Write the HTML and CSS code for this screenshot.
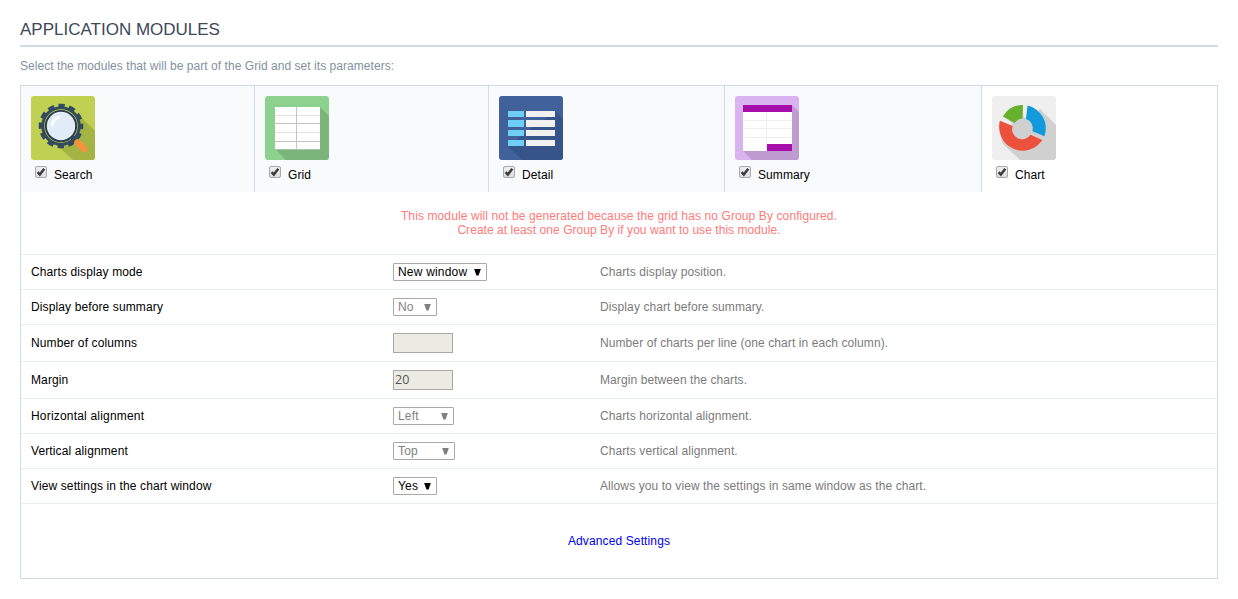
FILE: index.html
```html
<!DOCTYPE html>
<html lang="en">
<head>
<meta charset="utf-8">
<title>Application Modules</title>
<link rel="stylesheet" href="styles.css">
</head>
<body>
<svg class="defs" width="0" height="0"><defs>
<linearGradient id="box" x1="0" y1="0" x2="0" y2="1"><stop offset="0" stop-color="#f0f0f0"/><stop offset="1" stop-color="#dcdcdc"/></linearGradient>
<symbol id="check" viewBox="0 0 12 12"><rect x=".5" y=".5" width="11" height="11" rx="1.5" fill="url(#box)" stroke="#a9a9a9"/><path d="M2.6 6.2 4.8 8.6 9.3 2.8" fill="none" stroke="#3d3d3d" stroke-width="2.5"/></symbol>
<clipPath id="tile"><rect width="64" height="64" rx="3"/></clipPath>
</defs></svg>
<h1 class="title">APPLICATION MODULES</h1>
<p class="intro">Select the modules that will be part of the Grid and set its parameters:</p>
<main class="panel">
  <nav class="tabs">
    <div class="tab">
      <svg class="icon" viewBox="0 0 64 64"><g clip-path="url(#tile)"><rect width="64" height="64" fill="#bfd052"/><path d="M47 18 64 35V64H42L17 41Z" fill="#a4b444"/>
      <circle cx="30" cy="30" r="19.8" fill="#324a5e"/><circle cx="30" cy="30" r="20" fill="none" stroke="#324a5e" stroke-width="4.6" stroke-dasharray="6.2 4.27" stroke-dashoffset="3.1"/>
      <circle cx="30" cy="30" r="16.8" fill="#bfd052"/><circle cx="30" cy="30" r="16.1" fill="#2b3b4e"/><circle cx="30" cy="30" r="14.2" fill="#e0edf8"/><path d="M21 30a9 9 0 0 1 8-9" fill="none" stroke="#fff" stroke-width="3" opacity=".8"/>
      <path d="m41 41 4 4" stroke="#324a5e" stroke-width="5"/><path d="m46.5 46.500 6.500 6.500" stroke="#f7923a" stroke-width="6.500" stroke-linecap="round"/></g></svg>
      <label class="choice"><svg class="check"><use href="#check"/></svg>Search</label>
    </div>
    <div class="tab">
      <svg class="icon" viewBox="0 0 64 64"><g clip-path="url(#tile)"><rect width="64" height="64" fill="#8dd18f"/><path d="M55 11 64 20V64H21L10 53Z" fill="#7bb57c"/><rect x="10" y="11" width="45" height="43" fill="#fff"/><path d="M10 19.5h45M10 36.5h45" stroke="#e3e3e3"/><path d="M10 27.5h45M10 45.5h45M31.5 11v42" stroke="#c2c2c2"/><path d="M10 53.500h45" stroke="#a5c5a6"/></g></svg>
      <label class="choice"><svg class="check"><use href="#check"/></svg>Grid</label>
    </div>
    <div class="tab">
      <svg class="icon" viewBox="0 0 64 64"><g clip-path="url(#tile)"><rect width="64" height="64" fill="#40619a"/><path d="M56 15 64 23V64H23L9 50Z" fill="#37548a"/><path d="M9 15h16v6H9zM9 24h16v7H9zM9 34h16v6H9zM9 44h16v6H9z" fill="#6dcff6"/><path d="M27 15h29v6H27zM27 24h29v7H27zM27 34h29v6H27zM27 44h29v6H27z" fill="#f0f0f0"/></g></svg>
      <label class="choice"><svg class="check"><use href="#check"/></svg>Detail</label>
    </div>
    <div class="tab">
      <svg class="icon" viewBox="0 0 64 64"><g clip-path="url(#tile)"><rect width="64" height="64" fill="#d9b3ef"/><path d="M57 9 64 16V64H17L8 55Z" fill="#bd9bd0"/><rect x="8" y="9" width="49" height="46" fill="#fff"/><path d="M31.5 16V55M8 24.5h49M8 32.5h49M8 41.5h49" stroke="#eee"/><path d="M8 9h49v7H8zM32 48h25v7H32z" fill="#a80ea9"/></g></svg>
      <label class="choice"><svg class="check"><use href="#check"/></svg>Summary</label>
    </div>
    <div class="tab active">
      <svg class="icon" viewBox="0 0 64 64"><g clip-path="url(#tile)"><rect width="64" height="64" fill="#efefef"/><path d="M48 13 64 29V64H28L10 47 7 25 30 35Z" fill="#d0d0d0"/><path d="M11 20 30 9 32 24 22 29Z" fill="#d4d4d4"/><circle cx="30.5" cy="32" r="11" fill="#d0d0d0"/><path d="M35.500 9.5A23.5 23.5 0 0 1 52.5 40.3L40.5 35.2A10 10 0 0 0 34 23Z" fill="#119bdc"/><path d="M31 8.9 30.500 22.5A10 10 0 0 0 22.5 27L11 20.5A23 23 0 0 1 31 8.9Z" fill="#68b12d"/><path d="M8 24.8 20.7 30A10 10 0 0 0 38.5 38.8L50.3 44A23.5 23.5 0 0 1 8 24.8Z" fill="#eb513b"/></g></svg>
      <label class="choice"><svg class="check"><use href="#check"/></svg>Chart</label>
    </div>
  </nav>
  <p class="warning"><span class="reason">This module will not be generated because the grid has no Group By configured.</span><br>Create at least one Group By if you want to use this module.</p>
  <div class="row"><span class="name">Charts display mode</span><span class="field"><span class="select mode">New window<i class="arrow"></i></span></span><span class="help">Charts display position.</span></div>
  <div class="row"><span class="name">Display before summary</span><span class="field"><span class="select disabled short">No<i class="arrow"></i></span></span><span class="help">Display chart before summary.</span></div>
  <div class="row tall"><span class="name">Number of columns</span><span class="field"><span class="input"></span></span><span class="help">Number of charts per line (one chart in each column).</span></div>
  <div class="row tall"><span class="name">Margin</span><span class="field"><span class="input">20</span></span><span class="help">Margin between the charts.</span></div>
  <div class="row"><span class="name wide">Horizontal alignment</span><span class="field"><span class="select disabled left">Left<i class="arrow"></i></span></span><span class="help">Charts horizontal alignment.</span></div>
  <div class="row"><span class="name">Vertical alignment</span><span class="field"><span class="select disabled top">Top<i class="arrow"></i></span></span><span class="help">Charts vertical alignment.</span></div>
  <div class="row"><span class="name">View settings in the chart window</span><span class="field"><span class="select short">Yes<i class="arrow"></i></span></span><span class="help">Allows you to view the settings in same window as the chart.</span></div>
  <div class="footer"><a class="link">Advanced Settings</a></div>
</main>
</body>
</html>
```
FILE: styles.css
```css
* { box-sizing: border-box; }
body { margin: 0; padding: 0 20px; height: 599px; overflow: hidden; background: #fff; color: #000; font: 12px/14px "Liberation Sans", Arial, sans-serif; }
.defs { display: block; }
.title { margin: 0; padding-top: 20px; height: 47px; border-bottom: 2px solid #d0dce4; color: #3c4858; font-size: 17px; line-height: 20px; font-weight: 400; }
.intro { margin: 0; padding-top: 12px; height: 38px; color: #8292a0; letter-spacing: .045px; }
.panel { height: 494px; border: 1px solid #d0dce4; }
.tabs { display: grid; grid-template-columns: 233px 234px 236px 257px 1fr; height: 106px; }
.tab { padding: 10px; background: #f9fafc; border-left: 1px solid #d0dce4; }
.tab:first-child { border-left: 0; }
.tab.active { background: #fff; }
.icon { display: block; width: 64px; height: 64px; }
.choice { display: flex; align-items: flex-start; gap: 7px; padding: 8px 0 0 4px; letter-spacing: .08px; }
.check { width: 12px; height: 12px; margin-top: -2px; }
.warning { margin: 0; height: 62px; padding-top: 17px; text-align: center; color: #ff7b7b; letter-spacing: .05px; }
.reason { letter-spacing: .11px; }
.row { display: grid; grid-template-columns: 362px 207px 1fr; align-items: center; height: 35px; padding-left: 10px; border-top: 1px solid #e8edf1; }
.row.tall { height: 37px; }
.name { letter-spacing: .12px; }
.name.wide { letter-spacing: .19px; }
.help { color: #7b7b7b; letter-spacing: .09px; }
.select { display: flex; align-items: center; justify-content: space-between; height: 18px; padding: 0 5px 0 4px; border: 1px solid #a9a9a9; border-radius: 1px; background: #fff; letter-spacing: .2px; }
.mode { width: 94px; }
.short { width: 44px; }
.left { width: 61px; }
.top { width: 62px; }
.disabled { color: #808080; }
.arrow { width: 7px; height: 7px; background: currentColor; clip-path: polygon(0 0, 100% 0, 65% 100%, 35% 100%); }
.input { display: block; width: 60px; height: 20px; padding: 2px 1px; border: 1px solid #a9a9a9; background: #ebebe4; color: #555; font-family: "Open Sans", sans-serif; font-size: 12.5px; }
.footer { display: flex; justify-content: center; height: 75px; padding-top: 30px; border-top: 1px solid #e8edf1; }
.link { color: #0000ee; letter-spacing: .12px; }
```
